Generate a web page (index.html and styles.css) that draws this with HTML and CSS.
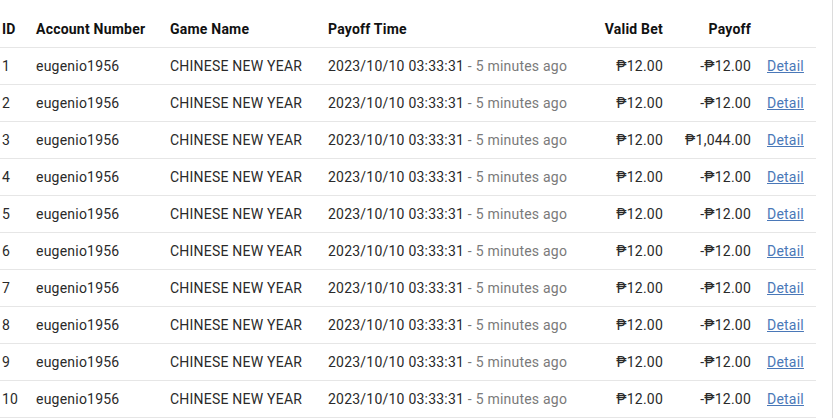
FILE: index.html
```html
<!DOCTYPE html>
<html>
<head>
<meta charset="utf-8">
<link rel="stylesheet" href="styles.css">
</head>
<body>
<div class="panel">
<table class="records">
<colgroup>
<col class="c-id"><col class="c-acc"><col class="c-game"><col class="c-time"><col class="c-bet"><col class="c-pay"><col class="c-act">
</colgroup>
<thead>
<tr><th>ID</th><th>Account Number</th><th>Game Name</th><th>Payoff Time</th><th class="num">Valid Bet</th><th class="num">Payoff</th><th></th></tr>
</thead>
<tbody>
<tr><td>1</td><td>eugenio1956</td><td>CHINESE NEW YEAR</td><td>2023/10/10 03:33:31 <span class="ago">- 5 minutes ago</span></td><td class="num">₱12.00</td><td class="num">-₱12.00</td><td class="act"><a href="#">Detail</a></td></tr>
<tr><td>2</td><td>eugenio1956</td><td>CHINESE NEW YEAR</td><td>2023/10/10 03:33:31 <span class="ago">- 5 minutes ago</span></td><td class="num">₱12.00</td><td class="num">-₱12.00</td><td class="act"><a href="#">Detail</a></td></tr>
<tr><td>3</td><td>eugenio1956</td><td>CHINESE NEW YEAR</td><td>2023/10/10 03:33:31 <span class="ago">- 5 minutes ago</span></td><td class="num">₱12.00</td><td class="num">₱1,044.00</td><td class="act"><a href="#">Detail</a></td></tr>
<tr><td>4</td><td>eugenio1956</td><td>CHINESE NEW YEAR</td><td>2023/10/10 03:33:31 <span class="ago">- 5 minutes ago</span></td><td class="num">₱12.00</td><td class="num">-₱12.00</td><td class="act"><a href="#">Detail</a></td></tr>
<tr><td>5</td><td>eugenio1956</td><td>CHINESE NEW YEAR</td><td>2023/10/10 03:33:31 <span class="ago">- 5 minutes ago</span></td><td class="num">₱12.00</td><td class="num">-₱12.00</td><td class="act"><a href="#">Detail</a></td></tr>
<tr><td>6</td><td>eugenio1956</td><td>CHINESE NEW YEAR</td><td>2023/10/10 03:33:31 <span class="ago">- 5 minutes ago</span></td><td class="num">₱12.00</td><td class="num">-₱12.00</td><td class="act"><a href="#">Detail</a></td></tr>
<tr><td>7</td><td>eugenio1956</td><td>CHINESE NEW YEAR</td><td>2023/10/10 03:33:31 <span class="ago">- 5 minutes ago</span></td><td class="num">₱12.00</td><td class="num">-₱12.00</td><td class="act"><a href="#">Detail</a></td></tr>
<tr><td>8</td><td>eugenio1956</td><td>CHINESE NEW YEAR</td><td>2023/10/10 03:33:31 <span class="ago">- 5 minutes ago</span></td><td class="num">₱12.00</td><td class="num">-₱12.00</td><td class="act"><a href="#">Detail</a></td></tr>
<tr><td>9</td><td>eugenio1956</td><td>CHINESE NEW YEAR</td><td>2023/10/10 03:33:31 <span class="ago">- 5 minutes ago</span></td><td class="num">₱12.00</td><td class="num">-₱12.00</td><td class="act"><a href="#">Detail</a></td></tr>
<tr><td>10</td><td>eugenio1956</td><td>CHINESE NEW YEAR</td><td>2023/10/10 03:33:31 <span class="ago">- 5 minutes ago</span></td><td class="num">₱12.00</td><td class="num">-₱12.00</td><td class="act"><a href="#">Detail</a></td></tr>
</tbody>
</table>
</div>
</body>
</html>
```
FILE: styles.css
```css
html, body {
  margin: 0;
  padding: 0;
  background: #ffffff;
}
body {
  font-family: Roboto, "Liberation Sans", sans-serif;
  font-size: 14px;
  letter-spacing: 0.22px;
  color: #2a2a2a;
}
.panel {
  width: 832px;
  min-height: 418px;
  border-right: 1px solid #dcdcdc;
}
.records {
  width: 816px;
  table-layout: fixed;
  border-collapse: separate;
  border-spacing: 0;
}
.c-id { width: 34px; }
.c-acc { width: 134px; }
.c-game { width: 158px; }
.c-time { width: 264px; }
.c-bet { width: 73px; }
.c-pay { width: 88px; }
.c-act { width: 65px; }
.records th,
.records td {
  box-sizing: border-box;
  padding: 0 0 0 2px;
  text-align: left;
  white-space: nowrap;
  vertical-align: middle;
  border-bottom: 1px solid #e6e6e6;
}
.records th {
  height: 48px;
  padding-top: 10px;
  font-weight: 700;
  color: #111111;
}
.records td {
  height: 37px;
}
.records .num {
  text-align: right;
  padding: 0;
}
.records th.num {
  padding-top: 10px;
}
.records .act {
  padding-left: 16px;
}
.ago {
  color: #7a7a7a;
}
.act a {
  color: #4a78b8;
  text-decoration: underline;
}
```
